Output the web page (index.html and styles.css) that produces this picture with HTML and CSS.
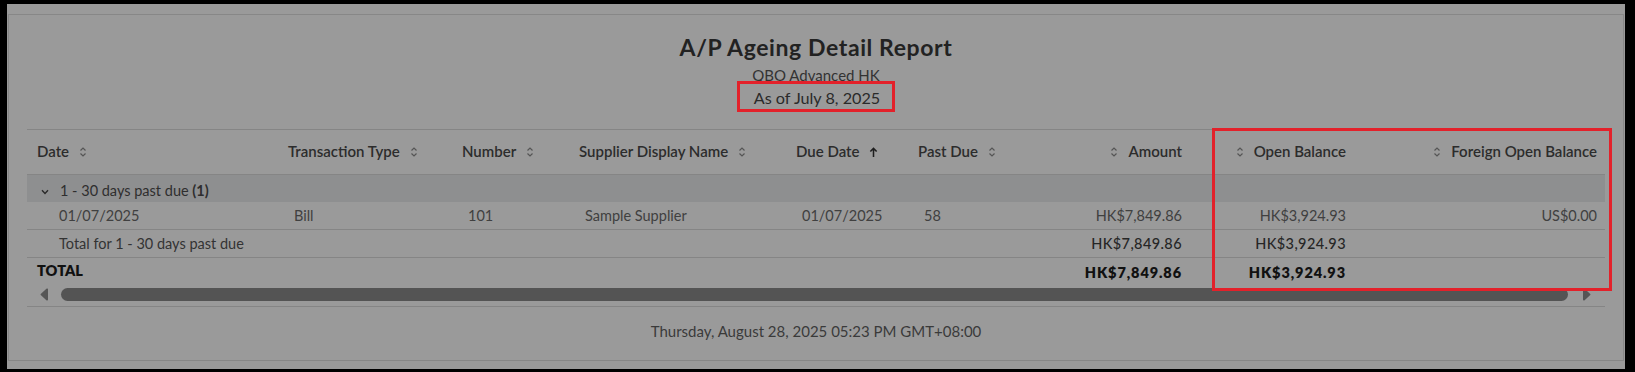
FILE: index.html
```html
<!DOCTYPE html>
<html lang="en">
<head>
<meta charset="utf-8">
<title>A/P Ageing Detail Report</title>
<link rel="stylesheet" href="styles.css">
</head>
<body>
<div class="frame">
  <section class="panel">
    <header class="report-head">
      <h1 class="title">A/P Ageing Detail Report</h1>
      <div class="company">QBO Advanced HK</div>
      <div class="asof"><span class="asof-box">As of July 8, 2025</span></div>
    </header>

    <div class="table-wrap">
      <table class="report">
        <colgroup>
          <col class="c-date"><col class="c-type"><col class="c-num"><col class="c-supp"><col class="c-due"><col class="c-past"><col class="c-amt"><col class="c-open"><col class="c-foreign">
        </colgroup>
        <thead>
          <tr>
            <th>Date<svg class="sort" viewBox="0 0 8 12" width="8" height="12"><path d="M1.5 4.5 4 2 6.5 4.5M1.5 7.5 4 10 6.5 7.5"/></svg></th>
            <th>Transaction Type<svg class="sort" viewBox="0 0 8 12" width="8" height="12"><path d="M1.5 4.5 4 2 6.5 4.5M1.5 7.5 4 10 6.5 7.5"/></svg></th>
            <th>Number<svg class="sort" viewBox="0 0 8 12" width="8" height="12"><path d="M1.5 4.5 4 2 6.5 4.5M1.5 7.5 4 10 6.5 7.5"/></svg></th>
            <th>Supplier Display Name<svg class="sort" viewBox="0 0 8 12" width="8" height="12"><path d="M1.5 4.5 4 2 6.5 4.5M1.5 7.5 4 10 6.5 7.5"/></svg></th>
            <th>Due Date<svg class="sort-up" viewBox="0 0 10 12" width="9" height="12"><path d="M5 11.5V2M1.5 5.5 5 2 8.5 5.5"/></svg></th>
            <th>Past Due<svg class="sort" viewBox="0 0 8 12" width="8" height="12"><path d="M1.5 4.5 4 2 6.5 4.5M1.5 7.5 4 10 6.5 7.5"/></svg></th>
            <th class="num"><svg class="sort lead" viewBox="0 0 8 12" width="8" height="12"><path d="M1.5 4.5 4 2 6.5 4.5M1.5 7.5 4 10 6.5 7.5"/></svg>Amount</th>
            <th class="num"><svg class="sort lead" viewBox="0 0 8 12" width="8" height="12"><path d="M1.5 4.5 4 2 6.5 4.5M1.5 7.5 4 10 6.5 7.5"/></svg>Open Balance</th>
            <th class="num"><svg class="sort lead" viewBox="0 0 8 12" width="8" height="12"><path d="M1.5 4.5 4 2 6.5 4.5M1.5 7.5 4 10 6.5 7.5"/></svg>Foreign Open Balance</th>
          </tr>
        </thead>
        <tbody>
          <tr class="group-row">
            <td colspan="9"><svg class="chev" viewBox="0 0 8 6" width="8" height="6"><path d="M1 1.2 4 4.4 7 1.2"/></svg>1 - 30 days past due <b>(1)</b></td>
          </tr>
          <tr class="data-row">
            <td class="indent">01/07/2025</td>
            <td>Bill</td>
            <td>101</td>
            <td>Sample Supplier</td>
            <td>01/07/2025</td>
            <td>58</td>
            <td class="num">HK$7,849.86</td>
            <td class="num">HK$3,924.93</td>
            <td class="num">US$0.00</td>
          </tr>
          <tr class="subtotal-row">
            <td class="indent" colspan="6">Total for 1 - 30 days past due</td>
            <td class="num">HK$7,849.86</td>
            <td class="num">HK$3,924.93</td>
            <td class="num"></td>
          </tr>
          <tr class="total-row">
            <td colspan="6">TOTAL</td>
            <td class="num">HK$7,849.86</td>
            <td class="num">HK$3,924.93</td>
            <td class="num"></td>
          </tr>
        </tbody>
      </table>
      <div class="hscroll">
        <svg class="arrow" viewBox="0 0 10 13" width="10" height="13"><path d="M9 1.5v10a1 1 0 0 1-1.6.8L2 7.3a1 1 0 0 1 0-1.6L7.4.7A1 1 0 0 1 9 1.5z"/></svg>
        <div class="thumb"></div>
        <svg class="arrow" viewBox="0 0 10 13" width="10" height="13"><path d="M1 1.5v10a1 1 0 0 0 1.6.8L8 7.3a1 1 0 0 0 0-1.6L2.6.7A1 1 0 0 0 1 1.5z"/></svg>
      </div>
      <div class="annot annot-cols"></div>
    </div>

    <footer class="report-foot">Thursday, August 28, 2025 05:23 PM GMT+08:00</footer>
  </section>
</div>
</body>
</html>
```

FILE: styles.css
```css
html, body {
  margin: 0;
  padding: 0;
  background: #000;
}

body {
  font-family: Lato, "Open Sans", sans-serif;
  color: #3c3c3c;
}

.frame {
  margin: 4px 10px 0 7px;
  height: 365px;
  box-sizing: border-box;
  padding: 10px 1px 0;
  background: #9a9a9a;
}

.panel {
  height: 347px;
  box-sizing: border-box;
  border: 1px solid #878787;
}

.report-head {
  padding-top: 20px;
  text-align: center;
}

.title {
  margin: 0;
  font-size: 23px;
  line-height: 25px;
  font-weight: 700;
  letter-spacing: 0.6px;
  color: #222;
}

.company {
  margin-top: 6px;
  font-size: 15px;
  line-height: 18px;
  color: #333;
}

.asof {
  display: flex;
  justify-content: center;
  margin-top: -3px;
}

.asof-box {
  display: block;
  padding: 4px 12px 1px 14px;
  border: 3px solid #e3212a;
  font-size: 16.2px;
  line-height: 20px;
  color: #2a2a2a;
}

.table-wrap {
  position: relative;
  margin: 17px 18px 0;
  border-top: 1px solid #858585;
}

.report {
  width: 100%;
  table-layout: fixed;
  border-collapse: separate;
  border-spacing: 0;
  font-size: 14.5px;
}

.c-date { width: 251px; }
.c-type { width: 174px; }
.c-num { width: 117px; }
.c-supp { width: 217px; }
.c-due { width: 122px; }
.c-past { width: 132px; }
.c-amt { width: 150px; }
.c-open { width: 164px; }
.c-foreign { width: 251px; }

.report th {
  height: 45px;
  padding: 0 0 3px 10px;
  box-sizing: border-box;
  border-bottom: 1px solid #858585;
  text-align: left;
  font-size: 15px;
  font-weight: 600;
  color: #2c2c2c;
  white-space: nowrap;
}

.report th.num {
  text-align: right;
  padding: 0 8px 3px 0;
}

.sort, .sort-up {
  vertical-align: -1px;
  margin-left: 10px;
  fill: none;
  stroke: #555;
  stroke-width: 1.2;
}

.sort.lead {
  margin: 0 10px 0 0;
}

.sort-up {
  stroke: #1e1e1e;
  stroke-width: 1.7;
}

.report td {
  padding: 0 0 0 16px;
  white-space: nowrap;
  color: #404040;
}

.report td.num {
  text-align: right;
  padding: 0 8px 0 0;
}

.report td.indent {
  padding-left: 32px;
}

.group-row td {
  height: 27px;
  box-sizing: border-box;
  padding: 3px 0 0 14px;
  background: #8e8f90;
  color: #2e2e2e;
}

.group-row b {
  font-weight: 700;
}

.chev {
  margin-right: 11px;
  vertical-align: 1px;
  fill: none;
  stroke: #2a2a2a;
  stroke-width: 1.4;
}

.data-row td,
.subtotal-row td {
  height: 28px;
  box-sizing: border-box;
  border-bottom: 1px solid #858585;
}

.subtotal-row td {
  color: #333;
}

.subtotal-row td.num {
  color: #262626;
  font-weight: 500;
  letter-spacing: 0.4px;
}

.total-row td {
  height: 29px;
  box-sizing: border-box;
  padding-left: 10px;
  padding-bottom: 4px;
  font-weight: 800;
  color: #111;
}

.total-row td.num {
  padding-left: 0;
  letter-spacing: 0.9px;
}

.hscroll {
  display: flex;
  align-items: flex-start;
  height: 20px;
  padding: 1px 13px 0 12px;
  box-sizing: border-box;
  border-bottom: 1px solid #858585;
}

.hscroll .arrow {
  flex: none;
  fill: #555;
}

.thumb {
  flex: 1;
  height: 13px;
  margin: 0 14px 0 12px;
  border-radius: 7px;
  background: #545454;
}

.annot {
  position: absolute;
  border: 3px solid #e3212a;
  box-sizing: border-box;
}

.annot-cols {
  left: 1185px;
  top: -2px;
  width: 400px;
  height: 163px;
}

.report-foot {
  padding: 14px 0 19px;
  text-align: center;
  font-size: 15px;
  line-height: 20px;
  color: #3a3a3a;
}
```
